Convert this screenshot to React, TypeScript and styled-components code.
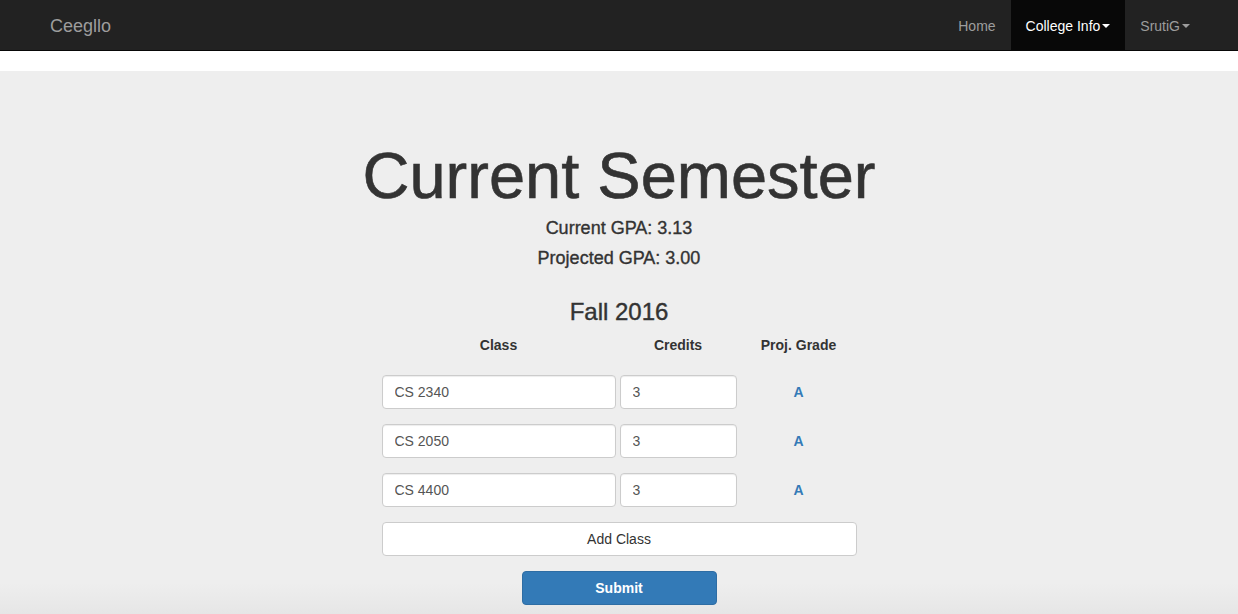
import React from "react";
import styled, { createGlobalStyle } from "styled-components";

const GlobalStyle = createGlobalStyle`
  html, body { margin: 0; padding: 0; }
  body {
    font-family: "Liberation Sans", Helvetica, Arial, sans-serif;
    font-size: 14px;
    line-height: 20px;
    color: #333;
    background: #fff;
  }
  * { box-sizing: border-box; }
`;

const Navbar = styled.nav`
  height: 51px;
  background: #222;
  border-bottom: 1px solid #080808;
  display: flex;
  align-items: stretch;
  justify-content: space-between;
  padding: 0 33px 0 35px;
  margin-bottom: 20px;
`;

const Brand = styled.a`
  display: block;
  padding: 16px 15px 14px;
  font-size: 18px;
  line-height: 20px;
  color: #9d9d9d;
  text-decoration: none;
`;

const NavList = styled.ul`
  display: flex;
  list-style: none;
  margin: 0;
  padding: 0;
`;

const NavItem = styled.li<{ $active?: boolean }>`
  display: flex;
  align-items: center;
  padding: 16px 15px 14px;
  height: 50px;
  line-height: 20px;
  font-size: 14px;
  color: ${(p) => (p.$active ? "#fff" : "#9d9d9d")};
  background: ${(p) => (p.$active ? "#080808" : "transparent")};
  cursor: pointer;
`;

const Caret = styled.span`
  display: inline-block;
  width: 0;
  height: 0;
  margin-left: 2px;
  border-top: 4px solid currentColor;
  border-left: 4px solid transparent;
  border-right: 4px solid transparent;
  vertical-align: middle;
`;

const Jumbotron = styled.main`
  min-height: calc(100vh - 71px);
  background: linear-gradient(to bottom, #eee 0, #eee 512px, #e6e6e6 543px);
  padding: 70px 0 10px;
  display: flex;
  flex-direction: column;
  align-items: center;
  text-align: center;
`;

const Title = styled.h1`
  margin: 0;
  font-size: 65px;
  line-height: 70px;
  font-weight: 400;
  color: #333;
  -webkit-text-stroke: 0.6px #333;
`;

const Stat = styled.p`
  margin: 0;
  font-size: 18px;
  line-height: 30px;
  -webkit-text-stroke: 0.35px #333;
`;

const StatGroup = styled.div`
  margin-top: 2px;
`;

const Term = styled.h3`
  margin: 24px 0 0;
  font-size: 24px;
  line-height: 30px;
  font-weight: 400;
  -webkit-text-stroke: 0.4px #333;
`;

const Form = styled.form`
  width: 475px;
  margin-top: 8px;
  display: flex;
  flex-direction: column;
  align-items: center;
`;

const Grid = styled.div`
  width: 100%;
  display: grid;
  grid-template-columns: 234px 117px 116px;
  column-gap: 4px;
  row-gap: 15px;
  align-items: center;
`;

const HeadCell = styled.div`
  font-weight: 700;
  font-size: 14px;
  line-height: 20px;
  margin-bottom: 5px;
`;

const Input = styled.input`
  display: block;
  width: 100%;
  height: 34px;
  padding: 6px 12px;
  font-family: inherit;
  font-size: 14px;
  line-height: 20px;
  color: #555;
  background: #fff;
  border: 1px solid #ccc;
  border-radius: 4px;
  box-shadow: inset 0 1px 1px rgba(0, 0, 0, 0.075);
  outline: none;
`;

const Grade = styled.a`
  font-weight: 700;
  color: #337ab7;
  text-decoration: none;
  text-align: center;
`;

const Button = styled.button<{ $primary?: boolean }>`
  display: block;
  height: 34px;
  padding: 6px 12px;
  font-family: inherit;
  font-size: 14px;
  line-height: 20px;
  border-radius: 4px;
  cursor: pointer;
  margin-top: 15px;
  font-weight: ${(p) => (p.$primary ? 700 : 400)};
  color: ${(p) => (p.$primary ? "#fff" : "#333")};
  background: ${(p) => (p.$primary ? "#337ab7" : "#fff")};
  border: 1px solid ${(p) => (p.$primary ? "#2e6da4" : "#ccc")};
  width: ${(p) => (p.$primary ? "195px" : "100%")};
`;

const classes = [
  { name: "CS 2340", credits: "3", grade: "A" },
  { name: "CS 2050", credits: "3", grade: "A" },
  { name: "CS 4400", credits: "3", grade: "A" },
];

export default function App() {
  return (
    <>
      <GlobalStyle />
      <Navbar>
        <Brand href="#">Ceegllo</Brand>
        <NavList>
          <NavItem>Home</NavItem>
          <NavItem $active>
            College Info
            <Caret />
          </NavItem>
          <NavItem>
            SrutiG
            <Caret />
          </NavItem>
        </NavList>
      </Navbar>
      <Jumbotron>
        <Title>Current Semester</Title>
        <StatGroup>
          <Stat>Current GPA: 3.13</Stat>
          <Stat>Projected GPA: 3.00</Stat>
        </StatGroup>
        <Term>Fall 2016</Term>
        <Form onSubmit={(e) => e.preventDefault()}>
          <Grid>
            <HeadCell>Class</HeadCell>
            <HeadCell>Credits</HeadCell>
            <HeadCell>Proj. Grade</HeadCell>
            {classes.map((c) => (
              <React.Fragment key={c.name}>
                <Input defaultValue={c.name} />
                <Input defaultValue={c.credits} />
                <Grade href="#">{c.grade}</Grade>
              </React.Fragment>
            ))}
          </Grid>
          <Button type="button">Add Class</Button>
          <Button type="submit" $primary>
            Submit
          </Button>
        </Form>
      </Jumbotron>
    </>
  );
}
